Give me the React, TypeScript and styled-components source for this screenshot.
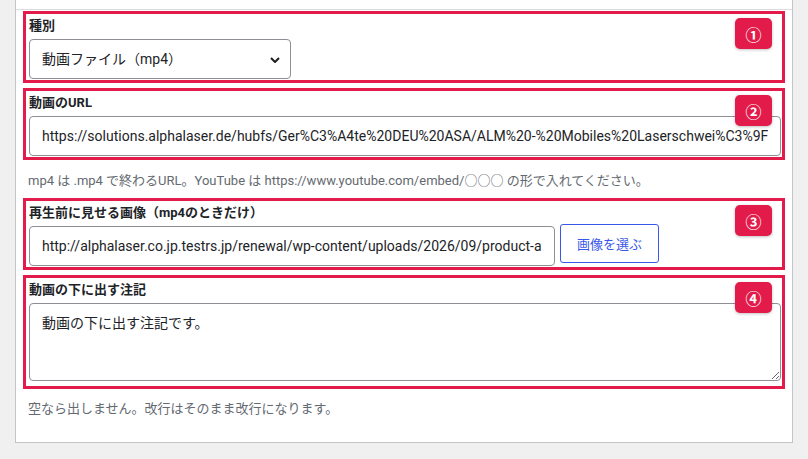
import React from "react";
import styled, { createGlobalStyle } from "styled-components";

const GlobalStyle = createGlobalStyle`
  html, body {
    margin: 0;
    padding: 0;
    background: #f0f0f1;
  }
  body {
    font-family: Roboto, "Noto Sans CJK JP", sans-serif;
    color: #1d2327;
  }
`;

const RED = "#e31b4a";
const FONT = `Roboto, "Noto Sans CJK JP", sans-serif`;

const Page = styled.div({
  width: "808px",
  height: "459px",
  overflow: "hidden",
  paddingLeft: "15px",
  boxSizing: "border-box",
});

const Panel = styled.div({
  width: "778px",
  boxSizing: "border-box",
  background: "#ffffff",
  borderLeft: "1px solid #c3c4c7",
  borderRight: "1px solid #c3c4c7",
  borderBottom: "1px solid #c3c4c7",
  paddingBottom: "24px",
});

const TopRule = styled.div({
  height: "9px",
  borderBottom: "1px solid #dcdcde",
  marginBottom: "1px",
});

const Body = styled.div({
  padding: "0 7px",
});

const FieldBox = styled.div<{ $bottom?: number; $gap?: number }>`
  position: relative;
  border: 3px solid ${RED};
  padding: 3px 1px ${(p) => p.$bottom ?? 1}px 3px;
  margin-top: ${(p) => p.$gap ?? 0}px;
`;

const Badge = styled.div`
  position: absolute;
  top: 4px;
  right: 10px;
  width: 37px;
  height: 31px;
  border-radius: 5px;
  background: ${RED};
  box-shadow: 0 1px 3px rgba(0, 0, 0, 0.25);
  color: #ffffff;
  font-family: "Noto Sans CJK JP", sans-serif;
  font-size: 16px;
  font-weight: 700;
  display: flex;
  align-items: center;
  justify-content: center;
  z-index: 2;
`;

const Label = styled.div({
  fontSize: "13px",
  fontWeight: 700,
  lineHeight: "18px",
  marginBottom: "4px",
  color: "#1d2327",
});

const SelectWrap = styled.div({
  position: "relative",
  width: "262px",
});

const Select = styled.select`
  appearance: none;
  width: 100%;
  height: 40px;
  box-sizing: border-box;
  border: 1px solid #8c8f94;
  border-radius: 4px;
  background: #ffffff;
  padding: 0 30px 0 12px;
  font-family: ${FONT};
  font-size: 14px;
  color: #1d2327;
  display: block;
`;

const Chevron = styled.svg({
  position: "absolute",
  right: "11px",
  top: "18px",
  pointerEvents: "none",
});

const TextInput = styled.input<{ $width?: string }>`
  display: block;
  width: ${(p) => p.$width ?? "100%"};
  height: 40px;
  box-sizing: border-box;
  border: 1px solid #8c8f94;
  border-radius: 4px;
  background: #ffffff;
  padding: 0 12px;
  font-family: ${FONT};
  font-size: 14px;
  color: #1d2327;
`;

const Row = styled.div({
  display: "flex",
  alignItems: "flex-start",
  gap: "5px",
});

const PickButton = styled.button`
  width: 99px;
  height: 39px;
  margin-top: -2px;
  box-sizing: border-box;
  border: 1px solid #3858e9;
  border-radius: 3px;
  background: #ffffff;
  color: #3858e9;
  font-family: ${FONT};
  font-size: 13px;
  padding: 0;
`;

const NoteArea = styled.textarea`
  display: block;
  width: 752px;
  height: 78px;
  box-sizing: border-box;
  border: 1px solid #8c8f94;
  border-radius: 4px;
  padding: 8px 12px;
  font-family: ${FONT};
  font-size: 14px;
  line-height: 22px;
  color: #1d2327;
  resize: vertical;
`;

const Help = styled.p<{ $top: number; $bottom: number }>`
  margin: ${(p) => p.$top}px 0 ${(p) => p.$bottom}px 5px;
  font-size: 13px;
  line-height: 18px;
  color: #646970;
`;

export default function App() {
  return (
    <Page>
      <GlobalStyle />
      <Panel>
        <TopRule />
        <Body>
          <FieldBox>
            <Badge>①</Badge>
            <Label>種別</Label>
            <SelectWrap>
              <Select defaultValue="mp4">
                <option value="mp4">動画ファイル（mp4）</option>
                <option value="youtube">YouTube</option>
              </Select>
              <Chevron width="10" height="6" viewBox="0 0 10 6">
                <path d="M1 1 L5 5 L9 1" fill="none" stroke="#1e1e1e" strokeWidth="2" />
              </Chevron>
            </SelectWrap>
          </FieldBox>

          <FieldBox $gap={5}>
            <Badge>②</Badge>
            <Label>動画のURL</Label>
            <TextInput
              type="text"
              defaultValue="https://solutions.alphalaser.de/hubfs/Ger%C3%A4te%20DEU%20ASA/ALM%20-%20Mobiles%20Laserschwei%C3%9Fen.mp4"
            />
          </FieldBox>
          <Help $top={12} $bottom={8}>
            mp4 は .mp4 で終わるURL。YouTube は https://www.youtube.com/embed/○○○ の形で入れてください。
          </Help>

          <FieldBox>
            <Badge>③</Badge>
            <Label>再生前に見せる画像（mp4のときだけ）</Label>
            <Row>
              <TextInput
                $width="526px"
                type="text"
                defaultValue="http://alphalaser.co.jp.testrs.jp/renewal/wp-content/uploads/2026/09/product-alm.jpg"
              />
              <PickButton type="button">画像を選ぶ</PickButton>
            </Row>
          </FieldBox>

          <FieldBox $gap={5} $bottom={5}>
            <Badge>④</Badge>
            <Label>動画の下に出す注記</Label>
            <NoteArea defaultValue="動画の下に出す注記です。" />
          </FieldBox>
          <Help $top={11} $bottom={0}>
            空なら出しません。改行はそのまま改行になります。
          </Help>
        </Body>
      </Panel>
    </Page>
  );
}
